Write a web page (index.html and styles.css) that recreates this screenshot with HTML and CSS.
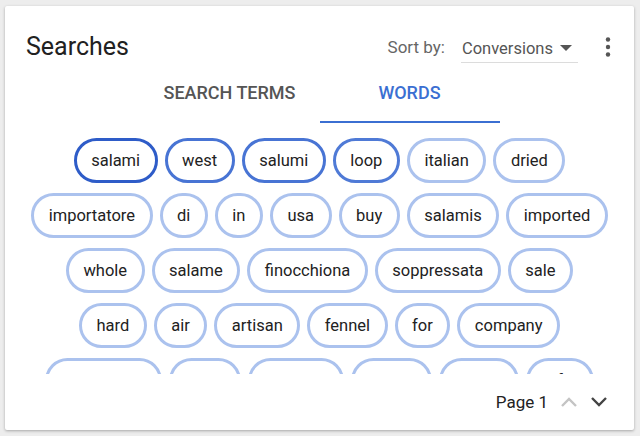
FILE: index.html
```html
<!DOCTYPE html>
<html lang="en">
<head>
    <meta charset="UTF-8">
    <meta name="viewport" content="width=device-width, initial-scale=1.0">
    <title>Searches</title>
    <link rel="stylesheet" href="styles.css">
</head>
<body>
    <div class="card">
        <div class="card-header">
            <h1 class="card-title">Searches</h1>
            <div class="sort">
                <span class="sort-label">Sort by:</span>
                <div class="sort-select">
                    <span>Conversions</span>
                    <svg class="caret" width="12" height="6" viewBox="0 0 12 6"><path d="M0 0 L12 0 L6 6 Z" fill="#555"/></svg>
                </div>
            </div>
            <button class="kebab" type="button" aria-label="More">
                <svg width="24" height="24" viewBox="0 0 24 24"><circle cx="12" cy="4.5" r="2.2" fill="#555"/><circle cx="12" cy="12" r="2.2" fill="#555"/><circle cx="12" cy="19.5" r="2.2" fill="#555"/></svg>
            </button>
        </div>

        <div class="tabs">
            <div class="tab">SEARCH TERMS</div>
            <div class="tab tab-active">WORDS</div>
        </div>

        <div class="chips">
            <div class="chip-row">
                <span class="chip chip-top1">salami</span>
                <span class="chip chip-top2">west</span>
                <span class="chip chip-top2">salumi</span>
                <span class="chip chip-top3">loop</span>
                <span class="chip">italian</span>
                <span class="chip">dried</span>
            </div>
            <div class="chip-row">
                <span class="chip">importatore</span>
                <span class="chip">di</span>
                <span class="chip">in</span>
                <span class="chip">usa</span>
                <span class="chip">buy</span>
                <span class="chip">salamis</span>
                <span class="chip">imported</span>
            </div>
            <div class="chip-row">
                <span class="chip">whole</span>
                <span class="chip">salame</span>
                <span class="chip">finocchiona</span>
                <span class="chip">soppressata</span>
                <span class="chip">sale</span>
            </div>
            <div class="chip-row">
                <span class="chip">hard</span>
                <span class="chip">air</span>
                <span class="chip">artisan</span>
                <span class="chip">fennel</span>
                <span class="chip">for</span>
                <span class="chip">company</span>
            </div>
            <div class="chip-row">
                <span class="chip">charcuterie</span>
                <span class="chip">ciotti</span>
                <span class="chip">summer</span>
                <span class="chip">roasts</span>
                <span class="chip">grilled</span>
                <span class="chip">gifts</span>
            </div>
        </div>

        <div class="card-footer">
            <span class="page">Page 1</span>
            <svg class="pager pager-off" width="18" height="12" viewBox="0 0 18 12"><path d="M2 10 L9 3 L16 10" fill="none" stroke="#c4c4c4" stroke-width="2.4"/></svg>
            <svg class="pager" width="18" height="12" viewBox="0 0 18 12"><path d="M2 2 L9 9 L16 2" fill="none" stroke="#444" stroke-width="2.4"/></svg>
        </div>
    </div>
</body>
</html>
```

FILE: styles.css
```css
body {
    font-family: Roboto, "Liberation Sans", Arial, sans-serif;
    background: #ededed;
    margin: 0;
    padding: 6px 6px 6px 5px;
}
.card {
    background: white;
    width: 629px;
    height: 424px;
    box-shadow: 0 1px 3px rgba(0, 0, 0, 0.3);
    border-radius: 2px;
    display: flex;
    flex-direction: column;
}
.card-header {
    display: flex;
    align-items: center;
    padding: 26px 14px 8px 21px;
    height: 30px;
}
.card-title {
    margin: 0;
    font-size: 25px;
    font-weight: 400;
    color: #212121;
    line-height: 30px;
    flex: 1;
}
.sort {
    display: flex;
    align-items: center;
    margin-right: 18px;
}
.sort-label {
    color: #666;
    font-size: 17px;
    margin-right: 16px;
}
.sort-select {
    display: flex;
    align-items: center;
    color: #555;
    font-size: 16.5px;
    border-bottom: 1px solid #dcdcdc;
    padding: 3px 6px 4px 1px;
    margin-top: 4px;
}
.caret {
    margin-left: 7px;
}
.kebab {
    background: none;
    border: none;
    padding: 0;
    width: 24px;
    height: 24px;
    cursor: pointer;
}
.tabs {
    display: flex;
    justify-content: center;
}
.tab {
    width: 180px;
    text-align: center;
    font-size: 18px;
    font-weight: 500;
    color: #555;
    line-height: 22px;
    padding: 12px 0 17px;
    border-bottom: 2px solid transparent;
}
.tab-active {
    color: #3b6fd2;
    border-bottom-color: #3b6fd2;
}
.chips {
    margin-top: 15px;
    height: 236px;
    overflow: hidden;
    display: flex;
    flex-direction: column;
    gap: 10px;
}
.chip-row {
    display: flex;
    justify-content: center;
    gap: 7px;
}
.chip {
    box-sizing: border-box;
    height: 45px;
    line-height: 39px;
    padding: 0 14.5px;
    border: 3px solid #abc2ee;
    border-radius: 23px;
    font-size: 16.5px;
    color: #222;
    white-space: nowrap;
}
.chip-top1 {
    border-color: #2e5cc8;
}
.chip-top2 {
    border-color: #4874d4;
}
.chip-top3 {
    border-color: #4f7ad6;
}
.card-footer {
    flex: 1;
    display: flex;
    justify-content: flex-end;
    align-items: center;
    padding-right: 26px;
}
.page {
    font-size: 17px;
    color: #222;
    margin-right: 12px;
}
.pager {
    margin-left: 12px;
}
.pager-off {
    margin-left: 0;
}
```
